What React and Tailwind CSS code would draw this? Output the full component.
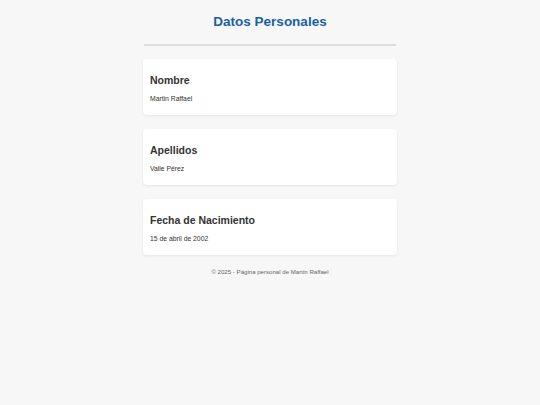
export default function App() {
  const items = [
    { label: "Nombre", value: "Martin Raffael" },
    { label: "Apellidos", value: "Valle Pérez" },
    { label: "Fecha de Nacimiento", value: "15 de abril de 2002" },
  ];

  return (
    <div className="min-h-[405px] bg-[#f7f7f7] font-['Liberation_Sans',Arial,sans-serif]">
      <div className="w-[254px] mx-auto pt-[13px]">
        {/* Cabecera */}
        <h1 className="text-center text-[13.5px] leading-[18px] font-bold text-[#1a5ea6]">
          Datos Personales
        </h1>
        <div className="mt-[13px] h-[2px] bg-[#dedede] mx-[1px]"></div>

        {/* Tarjetas */}
        <div className="mt-[13px] flex flex-col gap-[14px]">
          {items.map((item, index) => (
            <div
              key={index}
              className="bg-white rounded-[4px] shadow-[0_1px_3px_rgba(0,0,0,0.08)] px-[7px] pt-[14px] pb-[12px] h-[56px]"
            >
              <h2 className="text-[10.5px] leading-[14px] font-bold text-[#333]">{item.label}</h2>
              <p className="mt-[7px] text-[6.8px] leading-[9px] text-[#333]">{item.value}</p>
            </div>
          ))}
        </div>

        {/* Pie */}
        <p className="mt-[12px] text-center text-[6.1px] leading-[9px] text-[#666]">
          © 2025 - Página personal de Martin Raffael
        </p>
      </div>
    </div>
  );
}
